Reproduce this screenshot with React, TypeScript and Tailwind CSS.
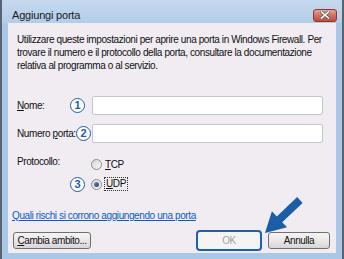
import React from 'react';

const font = { fontFamily: '"Liberation Sans", Arial, sans-serif' };

const Step = ({ n }: { n: number }) => (
  <span className="flex h-[15px] w-[15px] shrink-0 items-center justify-center rounded-full border-[1.5px] border-[#1d5ca8] bg-white text-[11px] font-bold leading-none tracking-normal text-[#1d5ca8]">
    {n}
  </span>
);

const Radio = ({ checked }: { checked?: boolean }) => (
  <span className="flex h-[11px] w-[11px] shrink-0 items-center justify-center rounded-full border border-[#8d8d8d] bg-gradient-to-br from-[#d8d8d8] to-[#f6f6f6]">
    {checked && <span className="h-[5px] w-[5px] rounded-full bg-gradient-to-br from-[#6b8fb8] to-[#1f3f6a]" />}
  </span>
);

const Field = () => (
  <div className="h-[19px] w-[231px] rounded-[2px] border border-[#c2c7cf] bg-white" />
);

export default function App() {
  return (
    <div style={font} className="relative h-[259px] w-[344px] overflow-hidden bg-[#a9c7e7] text-[10px] tracking-[-0.4px] text-[#111]">
      <div className="flex h-[259px] flex-col border-l-2 border-r-2 border-[#5a6470]">
        {/* title bar */}
        <div className="flex h-[23px] shrink-0 items-center justify-between bg-gradient-to-b from-[#c5d9ee] to-[#b3cde9] pl-[10px] pr-[5px]">
          <span className="mt-[7px] text-[11px] tracking-[-0.2px] text-[#1b1b1b]">Aggiungi porta</span>
          <div className="mt-[7px] flex h-[13px] w-[24px] items-center justify-center rounded-[3px] border border-[#8a3a30] bg-gradient-to-b from-[#e4a393] via-[#d2705f] to-[#c24c3a]">
            <svg width="10" height="8" viewBox="0 0 10 8">
              <path d="M1.5 1 L8.5 7 M8.5 1 L1.5 7" stroke="#5c5c5c" strokeWidth="3" strokeLinecap="square" />
              <path d="M1.5 1 L8.5 7 M8.5 1 L1.5 7" stroke="#ffffff" strokeWidth="1.6" strokeLinecap="square" />
            </svg>
          </div>
        </div>

        {/* client area */}
        <div className="mx-[6px] mb-[6px] flex flex-1 flex-col bg-[#f0ecf1]">
          <p className="mt-[10px] px-[9px] leading-[13px]">
            Utilizzare queste impostazioni per aprire una porta in Windows Firewall. Per trovare il numero e il protocollo della porta, consultare la documentazione relativa al programma o al servizio.
          </p>

          <div className="mt-[24px] flex h-[19px] items-center pl-[9px]">
            <span className="w-[53px]"><u>N</u>ome:</span>
            <Step n={1} />
            <span className="w-[7px]" />
            <Field />
          </div>

          <div className="mt-[9px] flex h-[19px] items-center pl-[9px]">
            <span className="w-[59px] whitespace-nowrap">Numero <u>p</u>orta:</span>
            <Step n={2} />
            <span className="w-[1px]" />
            <Field />
          </div>

          <div className="mt-[11px] flex pl-[9px]">
            <span className="mt-[1px] w-[53px] leading-[13px]">Protocollo:</span>
            <div className="flex flex-col">
              <div className="flex h-[20px] items-center">
                <span className="w-[15px]" />
                <span className="w-[6px]" />
                <Radio />
                <span className="ml-[3px]"><u>T</u>CP</span>
              </div>
              <div className="flex h-[20px] items-center">
                <Step n={3} />
                <span className="w-[6px]" />
                <Radio checked />
                <span className="ml-[2px] border border-dotted border-[#333] px-[1px] leading-[12px]"><u>U</u>DP</span>
              </div>
            </div>
          </div>

          <a className="mt-[15px] ml-[4px] self-start leading-[13px] text-[#0b5cc4] underline">
            Quali rischi si corrono aggiungendo una porta
          </a>

          <div className="mt-[8px] flex items-center pl-[5px] pr-[6px]">
            <button className="h-[17px] w-[78px] rounded-[3px] border border-[#707070] bg-gradient-to-b from-[#f4f4f4] via-[#e8e8e8] to-[#d6d6d6] text-[10px] leading-none">
              <u>C</u>ambia ambito...
            </button>
            <span className="flex-1" />
            <button className="h-[21px] w-[66px] rounded-[4px] border-2 border-[#1f5fae] bg-[#f4f4f4] text-[10px] leading-none text-[#a3a3a3]">
              OK
            </button>
            <span className="w-[6px]" />
            <button className="h-[17px] w-[62px] rounded-[3px] border border-[#707070] bg-gradient-to-b from-[#f4f4f4] via-[#e8e8e8] to-[#d6d6d6] text-[10px] leading-none">
              Annulla
            </button>
          </div>
        </div>
      </div>

      {/* callout arrow */}
      <svg className="pointer-events-none absolute left-0 top-0" width="344" height="259">
        <polygon
          points="265,233 287.1,227.3 282.2,222.2 302.6,202.9 297.2,197.1 276.8,216.4 271.9,211.3"
          fill="#1b5ea6"
        />
      </svg>
    </div>
  );
}
